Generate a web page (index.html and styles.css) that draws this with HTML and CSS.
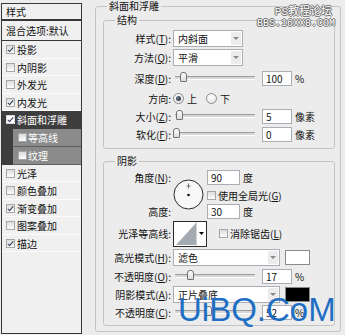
FILE: index.html
```html
<!DOCTYPE html>
<html lang="zh-CN">
<head>
  <meta charset="UTF-8">
  <title>图层样式 - 斜面和浮雕</title>
  <link rel="stylesheet" href="styles.css">
</head>
<body>
  <div class="dialog">
    <div class="styles-list">
      <div class="list-head">样式</div>
      <div class="list-blend">混合选项:默认</div>
      <div class="item"><span class="cb on"></span>投影</div>
      <div class="item"><span class="cb"></span>内阴影</div>
      <div class="item"><span class="cb"></span>外发光</div>
      <div class="item"><span class="cb on"></span>内发光</div>
      <div class="sel-group">
        <div class="item sel"><span class="cb on"></span>斜面和浮雕</div>
        <div class="item sub"><span class="cb"></span>等高线</div>
        <div class="item sub"><span class="cb"></span>纹理</div>
      </div>
      <div class="item"><span class="cb"></span>光泽</div>
      <div class="item"><span class="cb"></span>颜色叠加</div>
      <div class="item"><span class="cb on"></span>渐变叠加</div>
      <div class="item"><span class="cb"></span>图案叠加</div>
      <div class="item"><span class="cb on"></span>描边</div>
    </div>

    <fieldset class="group outer">
      <legend>斜面和浮雕</legend>

      <fieldset class="group inner struct">
        <legend>结构</legend>
        <div class="row h19">
          <span class="lbl">样式(<u>T</u>):</span>
          <div class="select w70"><span>内斜面</span><i class="arr"></i></div>
        </div>
        <div class="row h19">
          <span class="lbl">方法(<u>Q</u>):</span>
          <div class="select w70"><span>平滑</span><i class="arr"></i></div>
        </div>
        <div class="row h22">
          <span class="lbl">深度(<u>D</u>):</span>
          <div class="slider"><i class="thumb" style="left: 5px"></i></div>
          <span class="box">100</span><span class="unit">%</span>
        </div>
        <div class="row h18">
          <span class="lbl">方向:</span>
          <span class="radio on"></span><span class="rtxt">上</span>
          <span class="radio second"></span><span class="rtxt">下</span>
        </div>
        <div class="row h18">
          <span class="lbl">大小(<u>Z</u>):</span>
          <div class="slider"><i class="thumb" style="left: 1px"></i></div>
          <span class="box">5</span><span class="unit">像素</span>
        </div>
        <div class="row h18">
          <span class="lbl">软化(<u>F</u>):</span>
          <div class="slider"><i class="thumb" style="left: -2px"></i></div>
          <span class="box">0</span><span class="unit">像素</span>
        </div>
      </fieldset>

      <fieldset class="group inner shade">
        <legend>阴影</legend>
        <div class="angle-block">
          <span class="lbl a1">角度(<u>N</u>):</span>
          <svg class="dial" width="31" height="31" viewBox="0 0 31 31">
            <circle cx="15.5" cy="15.5" r="14.5" fill="#f8f8f8" stroke="#2a2a2a"/>
            <path d="M15.5 4.5v5M13.5 7h4" stroke="#777"/>
            <circle cx="15.5" cy="16" r="1.3" fill="#111"/>
          </svg>
          <div class="cell a1"><span class="box w33">90</span><span class="unit">度</span></div>
          <div class="cell a2"><span class="cb"></span><span class="ctxt">使用全局光(<u>G</u>)</span></div>
          <span class="lbl a3">高度:</span>
          <div class="cell a3"><span class="box w33">30</span><span class="unit">度</span></div>
        </div>
        <div class="row h27">
          <span class="lbl">光泽等高线:</span>
          <svg class="contour" width="34" height="26" viewBox="0 0 34 26">
            <rect x="0.5" y="0.5" width="33" height="25" fill="#fff" stroke="#2a2a2a"/>
            <path d="M3 24 L23 2 V24 Z" fill="#a3abb2"/>
            <path d="M23.5 1v24" stroke="#d0d0d0"/>
            <path d="M26 11h5l-2.5 3z" fill="#000"/>
          </svg>
          <span class="cb gap"></span><span class="ctxt">消除锯齿(<u>L</u>)</span>
        </div>
        <div class="row h20">
          <span class="lbl">高光模式(<u>H</u>):</span>
          <div class="select w107"><span>滤色</span><i class="arr"></i></div>
          <span class="swatch white"></span>
        </div>
        <div class="row h18">
          <span class="lbl">不透明度(<u>O</u>):</span>
          <div class="slider"><i class="thumb" style="left: 12px"></i></div>
          <span class="box">17</span><span class="unit">%</span>
        </div>
        <div class="row h19">
          <span class="lbl">阴影模式(<u>A</u>):</span>
          <div class="select w107"><span>正片叠底</span><i class="arr"></i></div>
          <span class="swatch black"></span>
        </div>
        <div class="row h16">
          <span class="lbl">不透明度(<u>C</u>):</span>
          <div class="slider"><i class="thumb" style="left: 30px"></i></div>
          <span class="box">52</span><span class="unit">%</span>
        </div>
      </fieldset>
    </fieldset>
  </div>

  <div class="wm-top">
    <div class="wm-line1">PS教程论坛</div>
    <div class="wm-line2">BBS.16XX8.COM</div>
  </div>
  <div class="wm-big">UiBQ.CoM</div>
</body>
</html>
```

FILE: styles.css
```css
body {
  margin: 0;
  width: 345px;
  height: 335px;
  overflow: hidden;
  position: relative;
  background: #ececec;
  font-family: "Noto Sans CJK SC", "Noto Sans", sans-serif;
  font-size: 10px;
  color: #111;
}
u {
  text-decoration: underline;
}
.dialog {
  display: flex;
  align-items: flex-start;
}

/* left list */
.styles-list {
  box-sizing: border-box;
  width: 81px;
  height: 331px;
  margin: 3px 0 0 1px;
  border: 1px solid #383838;
  background: #f0f0f0;
  flex-shrink: 0;
}
.list-head {
  height: 15px;
  line-height: 15px;
  padding-left: 4px;
  border-bottom: 2px solid #383838;
}
.list-blend {
  height: 19px;
  line-height: 19px;
  padding-left: 4px;
  border-bottom: 1px solid #383838;
}
.item {
  display: flex;
  align-items: center;
  height: 17.5px;
  padding-left: 4px;
  box-shadow: inset 0 -1px 0 #fbfbfb;
}
.item .cb {
  margin-right: 2px;
}
.sel-group {
  background: #3e3e3e;
}
.item.sel {
  color: #fff;
  box-shadow: none;
}
.item.sub {
  margin-left: 11px;
  padding-left: 5px;
  background: #8b8b8b;
  color: #fff;
  height: 18px;
  box-shadow: inset 0 -1px 0 #5e5e5e;
}
.item.sub .cb {
  margin-right: 1px;
}

/* checkbox / radio */
.cb {
  position: relative;
  box-sizing: border-box;
  width: 9px;
  height: 9px;
  border: 1px solid #a6a6a6;
  background: linear-gradient(#dcdcdc, #fdfdfd);
  flex-shrink: 0;
}
.cb.on::after {
  content: "";
  position: absolute;
  left: 2px;
  top: 0;
  width: 2px;
  height: 5px;
  border: solid #2c3a55;
  border-width: 0 1px 1px 0;
  transform: rotate(40deg);
}
.sel .cb {
  border-color: #d8d8d8;
  background: #fff;
}
.radio {
  box-sizing: border-box;
  width: 11px;
  height: 11px;
  border: 1px solid #8c8c8c;
  border-radius: 50%;
  background: radial-gradient(circle at 40% 35%, #fff, #dedede);
  flex-shrink: 0;
  display: flex;
  align-items: center;
  justify-content: center;
}
.radio.on::after {
  content: "";
  width: 5px;
  height: 5px;
  border-radius: 50%;
  background: radial-gradient(circle at 35% 35%, #6a7a90, #1c2230);
}
.radio.second {
  margin-left: 9px;
}
.rtxt {
  margin-left: 3px;
}

/* group boxes */
.group {
  margin: 0;
  padding: 0;
  min-width: 0;
  border: 1px solid #c4c4c4;
  border-radius: 3px;
}
.group legend {
  padding: 0 2px;
}
.outer {
  flex: 1;
  margin: 0 4px 0 13px;
  padding: 0 5px 5px 7px;
}
.outer > legend {
  margin-left: 4px;
  line-height: 12px;
}
.inner > legend {
  margin-left: 11px;
  line-height: 14px;
}
.struct {
  margin-top: 1px;
  padding: 2px 0 5px;
}
.shade {
  margin-top: 5px;
  padding: 0 0 5px;
}

/* rows */
.row {
  display: flex;
  align-items: center;
}
.h16 { height: 16px; }
.h18 { height: 18px; }
.h19 { height: 19px; }
.h20 { height: 20px; }
.h22 { height: 22px; }
.h27 { height: 27px; }
.lbl {
  box-sizing: border-box;
  width: 69px;
  padding-right: 2px;
  text-align: right;
  white-space: nowrap;
  flex-shrink: 0;
}

.select {
  box-sizing: border-box;
  height: 17px;
  display: flex;
  align-items: center;
  border: 1px solid #a9aeb6;
  background: #fff;
  padding-left: 4px;
}
.select span {
  flex: 1;
}
.w70 { width: 70px; }
.w107 { width: 107px; }
.arr {
  width: 10px;
  height: 13px;
  margin-right: 1px;
  background: #ececec;
  display: flex;
  align-items: center;
  justify-content: center;
}
.arr::after {
  content: "";
  border-top: 3px solid #8a8a8a;
  border-left: 3px solid transparent;
  border-right: 3px solid transparent;
}

.slider {
  position: relative;
  width: 80px;
  height: 2px;
  margin-left: 2px;
  border-top: 1px solid #9c9c9c;
  border-bottom: 1px solid #fff;
  background: #d6d6d6;
  border-radius: 1px;
  flex-shrink: 0;
}
.thumb {
  position: absolute;
  top: -5px;
  box-sizing: border-box;
  width: 7px;
  height: 10px;
  border: 1px solid #707070;
  border-radius: 3px 3px 1px 1px;
  background: linear-gradient(#ffffff, #dcdcdc);
}

.box {
  box-sizing: border-box;
  width: 30px;
  height: 15px;
  line-height: 13px;
  padding-left: 3px;
  border: 1px solid #a9aeb6;
  background: #fff;
  margin-left: 7px;
  flex-shrink: 0;
}
.box.w33 {
  width: 33px;
  margin-left: 0;
}
.unit {
  margin-left: 3px;
}

.angle-block {
  display: grid;
  grid-template-columns: 69px 34px 1fr;
  grid-template-rows: 19px 16px 17px;
  align-items: center;
}
.angle-block .a1 { grid-row: 1; }
.angle-block .a2 { grid-row: 2; }
.angle-block .a3 { grid-row: 3; }
.angle-block .lbl { grid-column: 1; }
.angle-block .cell {
  grid-column: 3;
  display: flex;
  align-items: center;
}
.dial {
  grid-column: 2;
  grid-row: 1 / 4;
  display: block;
}
.ctxt {
  margin-left: 2px;
  white-space: nowrap;
}
.contour {
  display: block;
  flex-shrink: 0;
}
.cb.gap {
  margin-left: 12px;
}
.swatch {
  box-sizing: border-box;
  width: 25px;
  height: 15px;
  margin-left: 5px;
  border: 1px solid #8a8a8a;
}
.swatch.white { background: #fff; }
.swatch.black { background: #000; }

/* watermarks */
.wm-top {
  position: absolute;
  top: 6px;
  right: 10px;
  text-align: right;
  color: #fff;
  font-family: "Liberation Mono", "Noto Sans CJK SC", monospace;
  text-shadow: 1px 0 #6a6a6a, -1px 0 #6a6a6a, 0 1px #6a6a6a, 0 -1px #6a6a6a;
}
.wm-line1 {
  font-size: 11px;
  line-height: 12px;
  margin-right: 3px;
}
.wm-line2 {
  font-size: 10px;
  line-height: 11px;
}
.wm-big {
  position: absolute;
  left: 178px;
  top: 293px;
  font-family: "Liberation Sans", Arial, sans-serif;
  font-size: 33px;
  line-height: 33px;
  color: #1f6fc4;
}
```
